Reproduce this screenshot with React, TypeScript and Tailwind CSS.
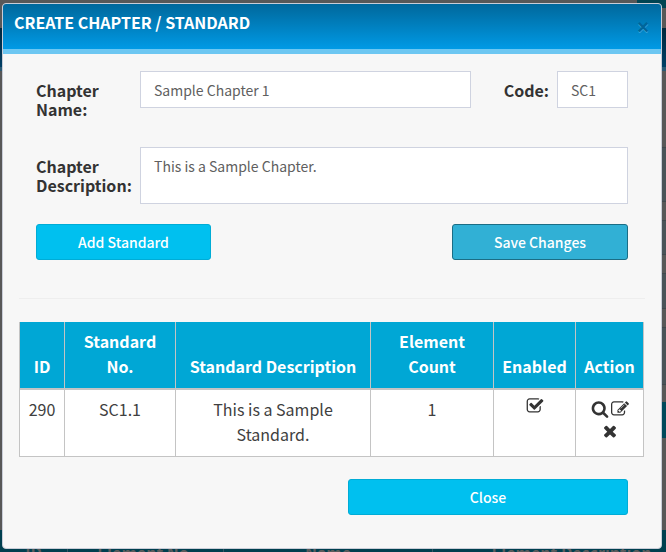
import type { ReactNode } from "react";

const icons = {
  check:
    "M1472 930v318q0 119-84.500 203.500t-203.500 84.500h-832q-119 0-203.500-84.500t-84.500-203.500v-832q0-119 84.500-203.500t203.500-84.500h832q63 0 117 25 15 7 18 23 3 17-9 29l-49 49q-10 10-23 10-3 0-9-2-23-6-45-6h-832q-66 0-113 47t-47 113v832q0 66 47 113t113 47h832q66 0 113-47t47-113v-254q0-13 9-22l64-64q10-10 23-10 6 0 12 3 20 8 20 29zm231-489l-814 814q-24 24-57 24t-57-24l-430-430q-24-24-24-57t24-57l110-110q24-24 57-24t57 24l263 263 647-647q24-24 57-24t57 24l110 110q24 24 24 57t-24 57z",
  search:
    "M1216 832q0-185-131.500-316.500t-316.500-131.500-316.500 131.500-131.500 316.500 131.500 316.500 316.500 131.500 316.500-131.500 131.500-316.500zm512 832q0 52-38 90t-90 38q-54 0-90-38l-343-342q-179 124-399 124-143 0-273.500-55.500t-225-150-150-225-55.500-273.500 55.500-273.500 150-225 225-150 273.500-55.500 273.500 55.500 225 150 150 225 55.500 273.500q0 220-124 399l343 343q37 37 37 90z",
  edit:
    "M888 1184l116-116-152-152-116 116v56h96v96h56zm440-720q-16-16-33 1l-350 350q-17 17-1 33t33-1l350-350q17-17 1-33zm80 594v190q0 119-84.500 203.500t-203.500 84.500h-832q-119 0-203.500-84.500t-84.500-203.500v-832q0-119 84.500-203.500t203.500-84.500h832q63 0 117 25 15 7 18 23 3 17-9 29l-49 49q-14 14-32 8-23-6-45-6h-832q-66 0-113 47t-47 113v832q0 66 47 113t113 47h832q66 0 113-47t47-113v-126q0-13 9-22l64-64q15-15 35-7t20 29zm-96-738l288 288-672 672h-288v-288zm444 132l-92 92-288-288 92-92q28-28 68-28t68 28l152 152q28 28 28 68t-28 68z",
  remove:
    "M1490 1322q0 40-28 68l-136 136q-28 28-68 28t-68-28l-294-294-294 294q-28 28-68 28t-68-28l-136-136q-28-28-28-68t28-68l294-294-294-294q-28-28-28-68t28-68l136-136q28-28 68-28t68 28l294 294 294-294q28-28 68-28t68 28l136 136q28 28 28 68t-28 68l-294 294 294 294q28 28 28 68z",
};

function Icon({ name }: { name: keyof typeof icons }) {
  return (
    <svg viewBox="0 0 1792 1792" className="size-[18px] fill-[#333]" aria-hidden="true">
      <path d={icons[name]} />
    </svg>
  );
}

function Backdrop() {
  return (
    <div aria-hidden="true" className="absolute inset-0 -z-10 flex flex-col overflow-hidden bg-[#585858]">
      <div className="flex h-2 shrink-0 justify-end">
        <div className="w-[29px] bg-[#004452]" />
      </div>
      <div className="h-5 shrink-0" />
      <div className="h-[43px] shrink-0 border-b-4 border-[#2a5a75] bg-linear-to-b from-[#00273d] to-[#003f66]" />
      <div className="h-[76px] shrink-0" />
      <div className="ml-5 flex h-[238px] shrink-0 flex-col gap-[18px]">
        <div className="h-[55px] border-y border-[#40484d] bg-[#4a5358]" />
        <div className="h-[35px] border-y border-[#40484d] bg-[#4a5358]" />
        <div className="h-[36px] border-y border-[#40484d] bg-[#4a5358]" />
        <div className="h-[58px] border-y border-[#40484d] bg-[#4a5358]" />
      </div>
      <div className="mt-[17px] ml-5 h-9 shrink-0 bg-[#00485a]" />
      <div className="mt-[92px] grid shrink-0 grid-cols-[67px_156px_209px_1fr] bg-[#003f4f] text-center text-base font-bold whitespace-nowrap text-[#5c5c5c]">
        <span className="pt-2.5">ID</span>
        <span className="border-l border-[#355563] pt-2.5">Element No.</span>
        <span className="border-l border-[#355563] pt-2.5">Name</span>
        <span className="border-l border-[#355563] pt-2.5 pl-11">Element Description</span>
      </div>
    </div>
  );
}

function Th({ children }: { children: ReactNode }) {
  return (
    <th className="border-x border-b-2 border-[#c4c4c4] px-1 pt-[7px] pb-[9px] align-bottom font-bold">{children}</th>
  );
}

function Td({ children }: { children: ReactNode }) {
  return <td className="border border-[#c4c4c4] px-2 pt-[7px] pb-[9px] align-top">{children}</td>;
}

const label = "pt-2.5 text-base leading-[19px] font-bold text-[#333]";
const field = "border border-[#cfd3e0] bg-white px-[13px] text-sm text-[#606060] outline-none";
const button = "h-9 rounded-[3px] border text-sm font-medium text-white";

export default function App() {
  return (
    <div className="relative isolate min-h-screen overflow-hidden px-0.5 pt-[3px] pb-[3px] font-['Noto_Sans_CJK_SC',sans-serif] text-[#333]">
      <Backdrop />
      <div role="dialog" aria-labelledby="dialog-title" className="mr-0.5 overflow-hidden rounded border border-[#c9cdd8] bg-[#f7f7f7]">
        <header className="flex h-[50px] justify-between border-b-[5px] border-[#6dc7f2] bg-linear-to-b from-[#00689c] to-[#00a0ee] bg-origin-border pr-3 pl-[11px]">
          <h1 id="dialog-title" className="pt-[7px] text-base leading-[22px] font-bold text-white">
            CREATE CHAPTER / STANDARD
          </h1>
          <button
            aria-label="Close dialog"
            className="mt-[11px] h-6 font-['Liberation_Sans',sans-serif] text-xl leading-6 font-bold text-[#00659a] [text-shadow:0_1px_0_#3ca8df]"
          >
            ×
          </button>
        </header>

        <form onSubmit={(e) => e.preventDefault()} className="px-[33px] pt-[17px]">
          <div className="grid grid-cols-[104px_minmax(0,1fr)_86px_71px]">
            <label htmlFor="name" className={label}>
              Chapter Name:
            </label>
            <input id="name" defaultValue="Sample Chapter 1" className={`${field} h-[37px] min-w-0`} />
            <label htmlFor="code" className={`${label} pr-2 text-right`}>
              Code:
            </label>
            <input id="code" defaultValue="SC1" className={`${field} h-[37px] min-w-0`} />
          </div>
          <div className="mt-[28px] grid grid-cols-[104px_minmax(0,1fr)]">
            <label htmlFor="description" className={label}>
              Chapter Description:
            </label>
            <textarea
              id="description"
              defaultValue="This is a Sample Chapter."
              className={`${field} h-[57px] resize-none pt-2 leading-5`}
            />
          </div>
          <div className="mt-5 flex justify-between">
            <button type="button" className={`${button} w-[175px] border-[#00acd6] bg-[#00c0ef]`}>
              Add Standard
            </button>
            <button type="submit" className={`${button} w-[176px] border-[#1b6d85] bg-[#31b0d5]`}>
              Save Changes
            </button>
          </div>
        </form>

        <hr className="mx-4 mt-[38px] border-[#eee]" />

        <div className="mr-[17px] ml-4 mt-[23px]">
          <table className="w-full table-fixed border-collapse bg-white text-center text-base leading-[25px]">
            <colgroup>
              <col className="w-[45px]" />
              <col className="w-[111px]" />
              <col />
              <col className="w-[123px]" />
              <col className="w-[82px]" />
              <col className="w-[68px]" />
            </colgroup>
            <thead className="bg-[#00a7d5] text-white">
              <tr>
                <Th>ID</Th>
                <Th>Standard<br />No.</Th>
                <Th>Standard Description</Th>
                <Th>Element<br />Count</Th>
                <Th>Enabled</Th>
                <Th>Action</Th>
              </tr>
            </thead>
            <tbody className="text-[#404040]">
              <tr>
                <Td>290</Td>
                <Td>SC1.1</Td>
                <Td>This is a Sample Standard.</Td>
                <Td>1</Td>
                <Td>
                  <span role="img" aria-label="Enabled" className="flex justify-center">
                    <Icon name="check" />
                  </span>
                </Td>
                <Td>
                  <div className="flex flex-wrap justify-center gap-x-0.5 gap-y-1 pt-[3px]">
                    <button aria-label="View"><Icon name="search" /></button>
                    <button aria-label="Edit"><Icon name="edit" /></button>
                    <button aria-label="Remove"><Icon name="remove" /></button>
                  </div>
                </Td>
              </tr>
            </tbody>
          </table>
        </div>

        <footer className="flex justify-end px-[33px] pt-[22px] pb-[33px]">
          <button className={`${button} w-[280px] border-[#00acd6] bg-[#00c0ef]`}>Close</button>
        </footer>
      </div>
    </div>
  );
}
